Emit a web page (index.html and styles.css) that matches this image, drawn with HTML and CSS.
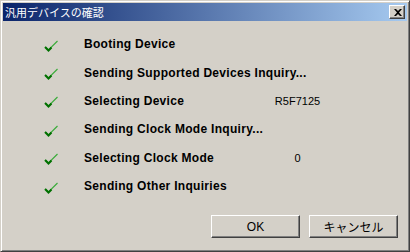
FILE: index.html
```html
<!DOCTYPE html>
<html lang="ja">
<head>
  <meta charset="UTF-8" />
  <title>汎用デバイスの確認</title>
  <link rel="stylesheet" href="styles.css">
</head>
<body>
  <div class="window">
    <div class="titlebar">
      <span class="title">汎用デバイスの確認</span>
      <button class="close" aria-label="閉じる">
        <svg width="8" height="7" viewBox="0 0 8 7">
          <path d="M0 0h2l2 2 2-2h2L5 3.5 8 7H6L4 5 2 7H0l3-3.5z" fill="#000"/>
        </svg>
      </button>
    </div>

    <div class="steps">
      <div class="step">
        <span class="check"><svg width="14" height="12" viewBox="0 0 14 12"><path d="M1.5 7 4.5 10 13.5 1" fill="none" stroke="#3cac3c" stroke-width="1.2"/><path d="M1 7 4.5 10.5 7.5 7.5" fill="none" stroke="#007000" stroke-width="2"/></svg></span>
        <span class="label">Booting Device</span>
        <span class="value"></span>
      </div>
      <div class="step">
        <span class="check"><svg width="14" height="12" viewBox="0 0 14 12"><path d="M1.5 7 4.5 10 13.5 1" fill="none" stroke="#3cac3c" stroke-width="1.2"/><path d="M1 7 4.5 10.5 7.5 7.5" fill="none" stroke="#007000" stroke-width="2"/></svg></span>
        <span class="label">Sending Supported Devices Inquiry...</span>
        <span class="value"></span>
      </div>
      <div class="step">
        <span class="check"><svg width="14" height="12" viewBox="0 0 14 12"><path d="M1.5 7 4.5 10 13.5 1" fill="none" stroke="#3cac3c" stroke-width="1.2"/><path d="M1 7 4.5 10.5 7.5 7.5" fill="none" stroke="#007000" stroke-width="2"/></svg></span>
        <span class="label">Selecting Device</span>
        <span class="value">R5F7125</span>
      </div>
      <div class="step">
        <span class="check"><svg width="14" height="12" viewBox="0 0 14 12"><path d="M1.5 7 4.5 10 13.5 1" fill="none" stroke="#3cac3c" stroke-width="1.2"/><path d="M1 7 4.5 10.5 7.5 7.5" fill="none" stroke="#007000" stroke-width="2"/></svg></span>
        <span class="label">Sending Clock Mode Inquiry...</span>
        <span class="value"></span>
      </div>
      <div class="step">
        <span class="check"><svg width="14" height="12" viewBox="0 0 14 12"><path d="M1.5 7 4.5 10 13.5 1" fill="none" stroke="#3cac3c" stroke-width="1.2"/><path d="M1 7 4.5 10.5 7.5 7.5" fill="none" stroke="#007000" stroke-width="2"/></svg></span>
        <span class="label">Selecting Clock Mode</span>
        <span class="value">0</span>
      </div>
      <div class="step">
        <span class="check"><svg width="14" height="12" viewBox="0 0 14 12"><path d="M1.5 7 4.5 10 13.5 1" fill="none" stroke="#3cac3c" stroke-width="1.2"/><path d="M1 7 4.5 10.5 7.5 7.5" fill="none" stroke="#007000" stroke-width="2"/></svg></span>
        <span class="label">Sending Other Inquiries</span>
        <span class="value"></span>
      </div>
    </div>

    <div class="buttons">
      <button class="btn">OK</button>
      <button class="btn">キャンセル</button>
    </div>
  </div>
</body>
</html>
```

FILE: styles.css
```css
body {
  margin: 0;
  padding: 0;
  background: #d4d0c8;
  font-family: "Liberation Sans", "Noto Sans CJK JP", sans-serif;
}

.window {
  width: 410px;
  height: 252px;
  box-sizing: border-box;
  background: #d4d0c8;
  border: 1px solid;
  border-color: #d4d0c8 #404040 #404040 #d4d0c8;
  box-shadow: inset 1px 1px #fff, inset -1px -1px #808080;
  padding: 2px;
  display: flex;
  flex-direction: column;
}

.titlebar {
  height: 18px;
  flex: 0 0 18px;
  background: linear-gradient(to right, #0a246a, #a6caf0);
  display: flex;
  align-items: center;
  justify-content: space-between;
  padding: 0 2px 0 2px;
}
.title {
  color: #fff;
  font-family: "Noto Sans CJK JP", sans-serif;
  font-size: 11px;
  line-height: 18px;
}
.close {
  width: 16px;
  height: 14px;
  padding: 0;
  margin: 0;
  background: #d4d0c8;
  border: 1px solid;
  border-color: #fff #404040 #404040 #fff;
  box-shadow: inset -1px -1px #808080;
  display: flex;
  align-items: center;
  justify-content: center;
}
.close svg {
  display: block;
  margin-left: 1px;
}

.steps {
  padding: 9px 0 0 41px;
  display: flex;
  flex-direction: column;
}
.step {
  height: 28.4px;
  display: flex;
  align-items: center;
}
.check {
  flex: 0 0 40px;
  display: flex;
  margin-top: 3px;
}
.check svg { display: block; }
.label {
  flex: 0 0 171px;
  white-space: nowrap;
  font-weight: bold;
  font-size: 12px;
  letter-spacing: 0.3px;
  color: #000;
}
.value {
  flex: 0 0 85px;
  text-align: center;
  font-size: 11px;
  color: #000;
}

.buttons {
  margin-top: auto;
  display: flex;
  justify-content: flex-end;
  gap: 9px;
  padding: 0 9px 11px 0;
}
.btn {
  width: 89px;
  height: 23px;
  padding: 0;
  background: #d4d0c8;
  border: 1px solid;
  border-color: #fff #404040 #404040 #fff;
  box-shadow: inset -1px -1px #808080;
  font-family: "Liberation Sans", "Noto Sans CJK JP", sans-serif;
  font-size: 12px;
  color: #000;
}
```
